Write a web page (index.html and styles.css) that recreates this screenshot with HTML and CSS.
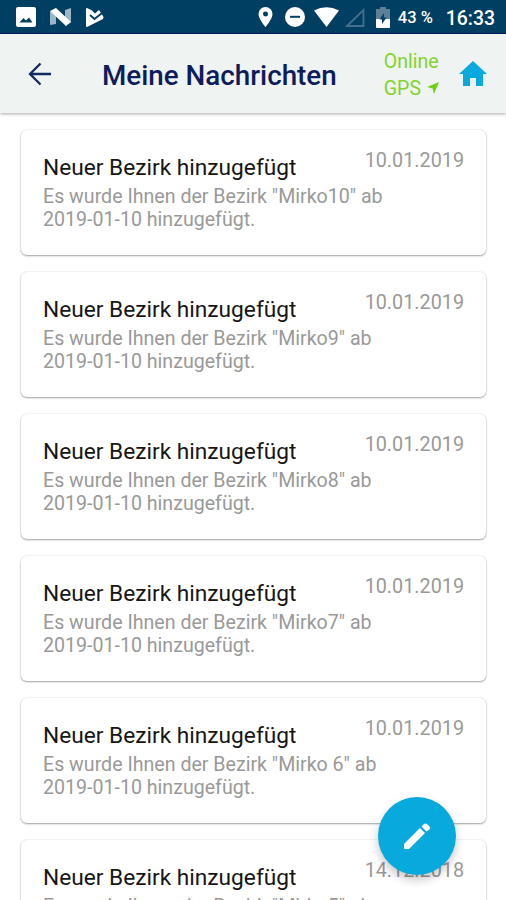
FILE: index.html
```html
<!DOCTYPE html>
<html lang="de">

<head>
    <meta charset="UTF-8">
    <title>Meine Nachrichten</title>
    <link rel="stylesheet" href="styles.css">
</head>

<body>
    <div class="status-bar">
        <div class="notifications">
            <svg width="20" height="20" viewBox="0 0 20 20">
                <path fill="#fff" fill-rule="evenodd" d="M2 0h16a2 2 0 0 1 2 2v16a2 2 0 0 1-2 2H2a2 2 0 0 1-2-2V2a2 2 0 0 1 2-2zM3.500 15.500h13L13 10.500l-3 3L7.500 11z" />
            </svg>
            <svg width="22" height="18" viewBox="0 0 22 18">
                <path fill="#9db4c4" d="M0 4l6-4v16l-6 1zM15 2l6-2v14l-6 4z" />
                <path fill="#fff" d="M0 3l6-3 15 14-5 4z" />
            </svg>
            <svg width="18" height="19" viewBox="0 0 18 19">
                <path fill="#fff" d="M1 0l5 2.500 3 3L13 2l2 3 2 3q1 1.500 0 3L1 19q-1 0-1-1V1q0-1 1-1z" />
                <path fill="none" stroke="#003e62" stroke-width="1.800" d="M4 7l4.500 4L16 5" />
            </svg>
        </div>
        <div class="system">
            <svg width="15" height="20" viewBox="0 0 15 20">
                <path fill="#fff" fill-rule="evenodd" d="M7.500 0A7 7 0 0 0 .5 7c0 5 7 13 7 13s7-8 7-13a7 7 0 0 0-7-7zm0 4.500a2.500 2.500 0 1 1 0 5 2.500 2.500 0 0 1 0-5z" />
            </svg>
            <svg class="dnd" width="20" height="20" viewBox="0 0 20 20">
                <circle cx="10" cy="10" r="10" fill="#fff" />
                <path fill="#003e62" d="M5 8.800h10v2H5z" />
            </svg>
            <svg class="wifi" width="25" height="20" viewBox="0 0 25 20">
                <path fill="#fff" d="M0 3.500Q12.500-3 25 3.500L12.500 20z" />
            </svg>
            <svg class="signal" width="20" height="19" viewBox="0 0 20 19">
                <path fill="none" stroke="#456f8b" stroke-width="1.800" d="M2 18L18.500 2v16z" />
            </svg>
            <svg class="battery" width="14" height="21" viewBox="0 0 14 21">
                <path fill="#5d8097" d="M4 0h6v2h4v10H0V2h4z" />
                <path fill="#fff" d="M0 12h14v8a1 1 0 0 1-1 1H1a1 1 0 0 1-1-1z" />
                <path fill="#003e62" d="M8 6l-4.500 6.500H6V17l4.500-6.500H8z" />
            </svg>
            <span class="percent">43 %</span>
            <span class="clock">16:33</span>
        </div>
    </div>

    <header class="toolbar">
        <svg class="back" width="24" height="24" viewBox="0 0 24 24">
            <path fill="none" stroke="#14295f" stroke-width="2.300" d="M23 12H2M12.500 1.500L2 12l10.500 10.500" />
        </svg>
        <h1>Meine Nachrichten</h1>
        <div class="connection">
            <div>Online</div>
            <div class="gps">GPS
                <svg width="12" height="12" viewBox="0 0 12 12">
                    <path fill="#6fd01c" d="M12 0L7 12 5.500 6.500 0 5z" />
                </svg>
            </div>
        </div>
        <svg class="home" width="28" height="25" viewBox="0 0 28 25">
            <path fill="#08a9dc" d="M14 0l14 13h-4v12h-7v-8h-6v8H4V13H0z" />
        </svg>
    </header>

    <main class="messages">
        <article class="card">
            <div class="text">
                <h2>Neuer Bezirk hinzugefügt</h2>
                <p>Es wurde Ihnen der Bezirk "Mirko10" ab<br>2019-01-10 hinzugefügt.</p>
            </div>
            <time>10.01.2019</time>
        </article>
        <article class="card">
            <div class="text">
                <h2>Neuer Bezirk hinzugefügt</h2>
                <p>Es wurde Ihnen der Bezirk "Mirko9" ab<br>2019-01-10 hinzugefügt.</p>
            </div>
            <time>10.01.2019</time>
        </article>
        <article class="card">
            <div class="text">
                <h2>Neuer Bezirk hinzugefügt</h2>
                <p>Es wurde Ihnen der Bezirk "Mirko8" ab<br>2019-01-10 hinzugefügt.</p>
            </div>
            <time>10.01.2019</time>
        </article>
        <article class="card">
            <div class="text">
                <h2>Neuer Bezirk hinzugefügt</h2>
                <p>Es wurde Ihnen der Bezirk "Mirko7" ab<br>2019-01-10 hinzugefügt.</p>
            </div>
            <time>10.01.2019</time>
        </article>
        <article class="card">
            <div class="text">
                <h2>Neuer Bezirk hinzugefügt</h2>
                <p>Es wurde Ihnen der Bezirk "Mirko 6" ab<br>2019-01-10 hinzugefügt.</p>
            </div>
            <time>10.01.2019</time>
        </article>
        <article class="card">
            <div class="text">
                <h2>Neuer Bezirk hinzugefügt</h2>
                <p>Es wurde Ihnen der Bezirk "Mirko5" ab</p>
            </div>
            <time>14.12.2018</time>
        </article>
    </main>

    <button class="compose" type="button" aria-label="Neue Nachricht">
        <svg width="28" height="28" viewBox="0 0 28 28">
            <path fill="#fff" d="M1 22L17 6l5 5L6 27H2q-1 0-1-1zM18.500 4.500L21 2q1.500-1.200 3 0l2.500 2.500q1 1.500 0 3L23.500 9.500z" />
        </svg>
    </button>
</body>

</html>
```
FILE: styles.css
```css
* {
    box-sizing: border-box;
}

body {
    margin: 0;
    height: 900px;
    overflow: hidden;
    background-color: #fff;
    font-family: Roboto, Arial, sans-serif;
}

svg {
    display: block;
    flex: none;
}

.status-bar {
    height: 34px;
    padding: 1px 11px 0 16px;
    display: flex;
    align-items: center;
    justify-content: space-between;
    background-color: #003e62;
    border-bottom: 1px solid #07185e;
    color: #fff;
}

.notifications {
    display: flex;
    align-items: center;
    gap: 14px;
}

.system {
    display: flex;
    align-items: center;
}

.dnd {
    margin-left: 12px;
}

.wifi {
    margin-left: 9px;
}

.signal {
    margin-left: 6px;
}

.battery {
    margin-left: 11px;
}

.percent {
    margin-left: 8px;
    font-size: 16.5px;
    font-weight: 500;
}

.clock {
    margin-top: 2px;
    margin-left: 13px;
    font-size: 19.4px;
    font-weight: 500;
}

.toolbar {
    position: relative;
    height: 79px;
    padding: 0 19px 0 28px;
    display: flex;
    align-items: center;
    background-color: #eff3f2;
    box-shadow: 0 1px 3px rgba(0, 0, 0, 0.35);
}

.toolbar h1 {
    margin: 3px 0 0 50px;
    font-size: 27.8px;
    font-weight: 500;
    color: #0d1c5c;
    white-space: nowrap;
}

.connection {
    margin: 2px 0 0 auto;
    font-size: 19.5px;
    line-height: 27px;
    color: #82d42c;
}

.gps {
    display: flex;
    align-items: center;
    gap: 6px;
}

.home {
    margin-left: 20px;
}

.messages {
    padding: 17px 20px 0 21px;
    display: flex;
    flex-direction: column;
    gap: 17px;
}

.card {
    height: 125px;
    flex: none;
    padding: 23px 22px 0;
    display: flex;
    justify-content: space-between;
    border-radius: 6px;
    background-color: #fff;
    box-shadow: 0 1px 2px rgba(0, 0, 0, 0.35), 0 0 2px rgba(0, 0, 0, 0.12);
    white-space: nowrap;
}

.card .text {
    flex: 1;
    min-width: 0;
}

.card h2 {
    margin: 0;
    font-size: 22.7px;
    line-height: 30px;
    font-weight: 400;
    color: #161616;
}

.card p {
    margin: 2px 0 0;
    font-size: 19.6px;
    line-height: 23px;
    color: #999;
}

.card time {
    margin-top: -4px;
    font-size: 19.8px;
    line-height: 24px;
    color: #999;
}

.compose {
    position: fixed;
    right: 50px;
    bottom: 25px;
    width: 78px;
    height: 78px;
    padding: 0;
    display: flex;
    align-items: center;
    justify-content: center;
    border: none;
    border-radius: 50%;
    background-color: #08a9dc;
    box-shadow: 0 5px 10px rgba(0, 0, 0, 0.22);
}
```
